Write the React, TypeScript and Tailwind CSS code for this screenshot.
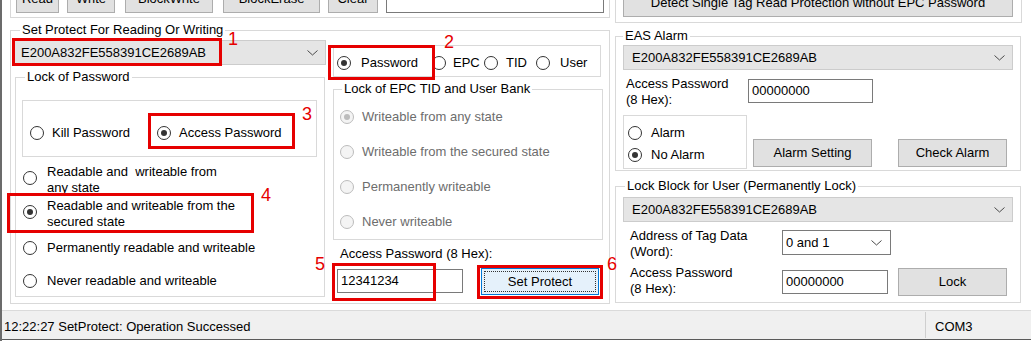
import clsx from "clsx"
import type { ReactNode } from "react"

const Chevron = () => (
  <svg width="11" height="6" viewBox="0 0 11 6" className="shrink-0">
    <polyline points="0.5,0.5 5.5,5 10.5,0.5" fill="none" stroke="#4a4a4a" strokeWidth="1" />
  </svg>
)

const Radio = ({ checked, disabled }: { checked?: boolean; disabled?: boolean }) => (
  <span
    className={clsx(
      "flex h-[14px] w-[14px] shrink-0 items-center justify-center rounded-full border",
      disabled ? "border-[#bcbcbc] bg-[#f4f4f4]" : "border-[#333333] bg-white"
    )}
  >
    {checked && <span className={clsx("h-[6px] w-[6px] rounded-full", disabled ? "bg-[#bcbcbc]" : "bg-[#333333]")} />}
  </span>
)

const Btn = ({ className, children }: { className?: string; children?: ReactNode }) => (
  <div className={clsx("flex shrink-0 items-center justify-center border border-[#adadad] bg-[#e1e1e1]", className)}>
    {children}
  </div>
)

const Combo = ({ className }: { className?: string }) => (
  <div className={clsx("flex h-[25px] items-center justify-between border border-[#cccccc] bg-[#e5e5e5] pl-[8px] pr-[7px]", className)}>
    <span>E200A832FE558391CE2689AB</span>
    <Chevron />
  </div>
)

const TextBox = ({ className, value }: { className?: string; value?: string }) => (
  <div className={clsx("flex shrink-0 items-center border border-[#7a7a7a] bg-white pl-[3px]", className)}>{value}</div>
)

const Group = ({
  title,
  className,
  legend = "ml-[8px]",
  children,
}: {
  title: string
  className?: string
  legend?: string
  children?: ReactNode
}) => (
  <fieldset className={clsx("border border-[#d9d9d9]", className)}>
    <legend className={clsx("px-[2px] leading-[14px]", legend)}>{title}</legend>
    {children}
  </fieldset>
)

const LOCK_OPTIONS = [
  { lines: ["Readable and  writeable from", "any state"], row: "h-[30px]" },
  { lines: ["Readable and writeable from the", "secured state"], row: "mt-[4px] h-[30px]", checked: true },
  { lines: ["Permanently readable and writeable"], row: "mt-[6px] h-[30px]" },
  { lines: ["Never readable and writeable"], row: "mt-[3px] h-[30px]" },
]

const EPC_OPTIONS = ["Writeable from any state", "Writeable from the secured state", "Permanently writeable", "Never writeable"]

const MARKS = [
  { n: "1", box: "left-[12px] top-[38px] w-[210px] h-[28px]", num: "left-[228px] top-[30px]" },
  { n: "2", box: "left-[328px] top-[45px] w-[107px] h-[35px]", num: "left-[444px] top-[33px]" },
  { n: "3", box: "left-[148px] top-[113px] w-[147px] h-[36px]", num: "left-[302px] top-[105px]" },
  { n: "4", box: "left-[7px] top-[193px] w-[247px] h-[40px]", num: "left-[261px] top-[186px]" },
  { n: "5", box: "left-[332px] top-[263px] w-[104px] h-[38px]", num: "left-[315px] top-[255px]" },
  { n: "6", box: "left-[477px] top-[265px] w-[126px] h-[34px]", num: "left-[607px] top-[255px]" },
]

const App = () => {
  return (
    <div className="relative h-[341px] w-[1031px] overflow-hidden bg-white font-['Liberation_Sans',Arial,sans-serif] text-[13px] leading-[16px] text-black">
      <div className="h-full border-l-2 border-[#6b6b6b]">
        {/* top strip, cut off by the window */}
        <div className="flex h-[23px]">
          <div className="ml-[8px] h-[18px] w-[600px] border-x border-b border-[#d9d9d9]">
            <div className="-mt-[15px] flex pl-[5px]">
              <Btn className="h-[28px] w-[43px]">Read</Btn>
              <Btn className="ml-[8px] h-[28px] w-[48px]">Write</Btn>
              <Btn className="ml-[10px] h-[28px] w-[88px]">BlockWrite</Btn>
              <Btn className="ml-[10px] h-[28px] w-[97px]">BlockErase</Btn>
              <Btn className="ml-[8px] h-[28px] w-[50px]">Clear</Btn>
              <TextBox className="ml-[8px] h-[28px] w-[218px]" />
            </div>
          </div>
          <div className="ml-[5px] h-[23px] w-[407px] border-x border-b border-[#d9d9d9]">
            <Btn className="-mt-[11px] ml-[7px] h-[28px] w-[390px]">Detect Single Tag Read Protection without EPC Password</Btn>
          </div>
        </div>

        <div className="flex h-[287px]">
          {/* Set Protect */}
          <Group title="Set Protect For Reading Or Writing" legend="ml-[9px]" className="ml-[8px] h-[281px] w-[600px]">
            <div className="flex">
              <div className="ml-[1px] w-[314px]">
                <Combo className="mt-[3px]" />
                <Group title="Lock of Password" legend="ml-[9px]" className="ml-[3px] mt-[5px] h-[227px] w-[310px]">
                  <div className="ml-[6px] mt-[16px] flex h-[57px] w-[295px] items-center border border-[#d9d9d9] pl-[7px] pt-[9px]">
                    <div className="flex w-[127px] items-center gap-[8px]">
                      <Radio />
                      <span>Kill Password</span>
                    </div>
                    <div className="flex items-center gap-[8px]">
                      <Radio checked />
                      <span>Access Password</span>
                    </div>
                  </div>
                  <div className="mt-[6px]">
                    {LOCK_OPTIONS.map((o) => (
                      <div key={o.lines[0]} className={clsx("flex items-center overflow-hidden pl-[7px]", o.row)}>
                        <Radio checked={o.checked} />
                        <div className={o.lines.length === 1 ? "ml-[10px]" : "ml-[10px] self-start pt-[1px]"}>
                          {o.lines.map((l) => (
                            <div key={l} className="whitespace-pre">
                              {l}
                            </div>
                          ))}
                        </div>
                      </div>
                    ))}
                  </div>
                </Group>
              </div>

              <div className="ml-[7px] w-[270px]">
                <div className="mt-[8px] flex h-[32px] w-[268px] items-center border border-[#d9d9d9] pl-[3px] pt-[3px]">
                  <div className="flex w-[95px] items-center gap-[10px]">
                    <Radio checked />
                    <span>Password</span>
                  </div>
                  <div className="flex w-[52px] items-center gap-[7px]">
                    <Radio />
                    <span>EPC</span>
                  </div>
                  <div className="flex w-[52px] items-center gap-[8px]">
                    <Radio />
                    <span>TID</span>
                  </div>
                  <div className="flex items-center gap-[10px]">
                    <Radio />
                    <span>User</span>
                  </div>
                </div>
                <Group title="Lock of EPC TID and User Bank" className="mt-[5px] h-[158px] w-[270px]">
                  <div className="pt-[3px]">
                    {EPC_OPTIONS.map((o, i) => (
                      <div key={o} className="flex h-[35px] items-center gap-[8px] pl-[6px] text-[#6d6d6d]">
                        <Radio disabled checked={i === 0} />
                        <span>{o}</span>
                      </div>
                    ))}
                  </div>
                </Group>
                <div className="mt-[7px] pl-[7px] leading-[14px]">Access Password (8 Hex):</div>
                <div className="mt-[8px] flex items-start">
                  <TextBox className="ml-[4px] h-[24px] w-[126px]" value="12341234" />
                  <div className="-mt-[1px] ml-[18px] flex h-[27px] w-[118px] items-center justify-center border border-[#0078d7] bg-[#e5f1fb] p-[2px]">
                    <div className="flex h-full w-full items-center justify-center border border-dotted border-[#333333]">
                      Set Protect
                    </div>
                  </div>
                </div>
              </div>
            </div>
          </Group>

          {/* right column */}
          <div className="ml-[5px] mt-[6px] w-[407px]">
            <Group title="EAS Alarm" legend="ml-[7px]" className="h-[142px] w-[406px]">
              <Combo className="ml-[7px] mt-[2px] w-[390px]" />
              <div className="mt-[6px] flex items-start">
                <div className="ml-[10px] w-[122px]">
                  <div>Access Password</div>
                  <div>(8 Hex):</div>
                </div>
                <TextBox className="mt-[3px] h-[24px] w-[125px]" value="00000000" />
              </div>
              <div className="mt-[7px] flex items-start">
                <div className="ml-[7px] h-[54px] w-[124px] border border-[#d9d9d9] pl-[4px] pt-[6px]">
                  <div className="flex h-[22px] items-center gap-[9px]">
                    <Radio />
                    <span>Alarm</span>
                  </div>
                  <div className="flex h-[22px] items-center gap-[9px]">
                    <Radio checked />
                    <span>No Alarm</span>
                  </div>
                </div>
                <Btn className="ml-[6px] mt-[24px] h-[28px] w-[119px]">Alarm Setting</Btn>
                <Btn className="ml-[26px] mt-[24px] h-[28px] w-[109px]">Check Alarm</Btn>
              </div>
            </Group>

            <Group title="Lock Block for User (Permanently Lock)" legend="ml-[9px]" className="mt-[8px] h-[124px] w-[406px]">
              <Combo className="ml-[7px] mt-[4px] w-[390px]" />
              <div className="mt-[6px] flex items-start">
                <div className="ml-[14px] w-[152px]">
                  <div>Address of Tag Data</div>
                  <div>(Word):</div>
                </div>
                <div className="mt-[2px] flex h-[25px] w-[109px] items-center justify-between border border-[#7a7a7a] bg-white pl-[3px] pr-[8px]">
                  <span>0 and 1</span>
                  <Chevron />
                </div>
              </div>
              <div className="mt-[5px] flex items-start">
                <div className="ml-[14px] w-[152px]">
                  <div>Access Password</div>
                  <div>(8 Hex):</div>
                </div>
                <TextBox className="mt-[5px] h-[24px] w-[106px]" value="00000000" />
                <Btn className="ml-[10px] mt-[3px] h-[28px] w-[109px]">Lock</Btn>
              </div>
            </Group>
          </div>
        </div>

        {/* status bar */}
        <div className="flex h-[30px] border-t border-b border-t-[#dadada] border-b-[#5a5a5a] bg-[#f0f0f0]">
          <div className="flex w-[923px] items-center pl-[2px] pt-[3px]">12:22:27 SetProtect: Operation Successed</div>
          <div className="my-[1px] flex items-center border-l border-[#cfcfcf] pl-[9px] pt-[3px]">COM3</div>
        </div>
      </div>

      {/* red annotations drawn over the form */}
      {MARKS.map((m) => (
        <div key={m.n}>
          <div className={clsx("absolute border-[3px] border-[#e60000]", m.box)} />
          <div className={clsx("absolute text-[18px] leading-[18px] text-[#e60000]", m.num)}>{m.n}</div>
        </div>
      ))}
    </div>
  )
}

export default App
